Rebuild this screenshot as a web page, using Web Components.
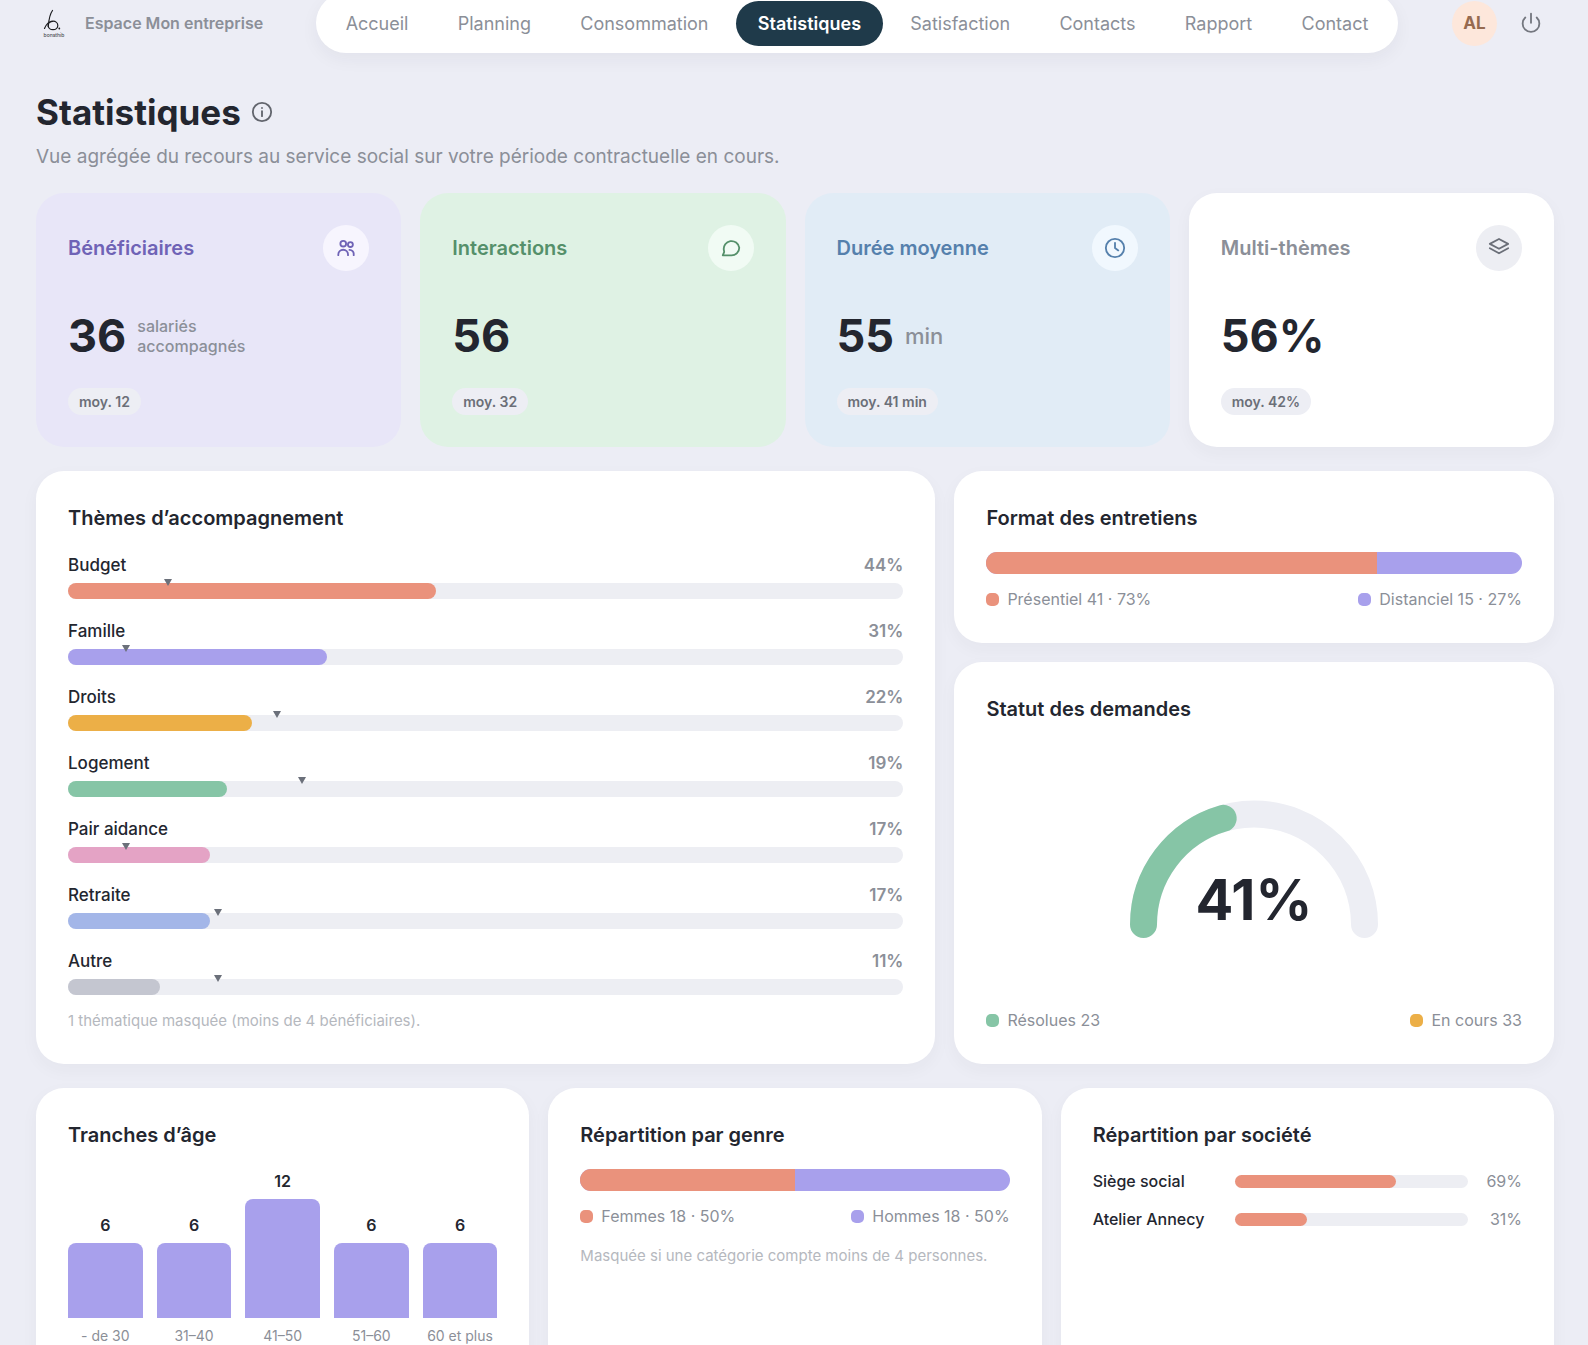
<!DOCTYPE html>
<html lang="fr">
<head>
<meta charset="utf-8">
<meta name="viewport" content="width=device-width, initial-scale=1">
<title>Statistiques</title>
<style>
  :root {
    --bg: #ecedf5; --ink: #23262f; --muted: #8b8f98; --faint: #b5b8be; --track: #edeef3;
    --coral: #ea927c; --lilac: #a8a0ec; --amber: #ecaf47; --green: #86c5a6;
    --pink: #e4a3c5; --blue: #a3b6e8; --grey: #c4c6d0;
    --gap: 19px;
  }
  body {
    margin: 0; height: 100vh; overflow: auto; scrollbar-width: none;
    background: var(--bg); color: var(--ink);
    font: 400 16px/24px Inter, "Open Sans", sans-serif;
  }
</style>
</head>
<body>
<stats-page></stats-page>
<script>
const define = (name, html, setup) => {
  const tpl = document.createElement('template');
  tpl.innerHTML = '<style>*{box-sizing:border-box}</style>' + html;
  customElements.define(name, class extends HTMLElement {
    connectedCallback() {
      if (this.shadowRoot) return;
      const root = this.attachShadow({ mode: 'open' });
      root.append(tpl.content.cloneNode(true));
      if (setup) setup(this, root);
    }
  });
};
const fill = (root, sel, text) => { root.querySelector(sel).textContent = text; };

const icons = {
  users: '<circle cx="9" cy="7.300" r="3.100"/><circle cx="16.800" cy="8.200" r="2.700"/><path d="M3.600 19.800v-.6a5.300 5.300 0 0 1 10.600 0v.6M15.800 14a4.400 4.400 0 0 1 4.600 4.800v1"/>',
  chat: '<path d="M21 11.600a8.400 8.400 0 0 1-8.400 8.400H3l1.300-2.900c.5-1.100.2-1.900-.1-2.800A8.400 8.400 0 1 1 21 11.600z"/>',
  clock: '<circle cx="12" cy="12" r="10"/><path d="M12 6.400V12l3.600 2.600"/>',
  layers: '<path d="M12 2.200 2 7.500 12 12.800l10-5.300z"/><path d="M2 12.300 12 17.700l10-5.400"/>',
  info: '<circle cx="12" cy="12" r="10"/><path d="M12 11v5.500M12 7.500v.2"/>',
  power: '<path d="M12 1.800v10"/><path d="M5.800 6a9.100 9.100 0 1 0 12.400 0"/>'
};
define('app-icon', `
  <style>:host{display:block;width:22px;height:22px;flex:none}
  svg{display:block;width:100%;height:100%;fill:none;stroke:currentColor;stroke-width:2;stroke-linecap:round;stroke-linejoin:round}</style>
  <svg viewBox="0 0 24 24" aria-hidden="true"></svg>`,
  (el, root) => { root.querySelector('svg').innerHTML = icons[el.getAttribute('name')]; });

define('app-header', `
  <style>
    :host{display:grid;grid-template-columns:280px minmax(0,1fr) 156px;align-items:center;margin-top:-7px;height:60px}
    .brand{display:flex;align-items:center;gap:18px;padding-left:5px;color:var(--muted);font-weight:600;font-size:16px;white-space:nowrap}
    .brand svg{width:26px;height:28px;flex:none}
    nav{display:flex;gap:6px;padding:8px 8px 7px;border-radius:30px;height:60px;background:#fff;box-shadow:0 6px 18px rgba(40,40,50,.05)}
    a{flex:1 1 auto;display:flex;align-items:center;justify-content:center;border-radius:23px;color:var(--muted);font-size:18px;text-decoration:none;white-space:nowrap}
    a[aria-current]{background:#1f3a4a;color:#fff;font-weight:600}
    .user{display:flex;align-items:center;justify-content:flex-end;gap:10px}
    .avatar{display:grid;place-items:center;width:45px;height:45px;border-radius:50%;background:#fde7db;color:#966a50;font-weight:700;font-size:17px}
    button{display:grid;place-items:center;width:47px;height:45px;padding:0;border:0;background:none;color:#74777f}
  </style>
  <div class="brand">
    <svg viewBox="0 0 26 28" role="img" aria-label="Logo">
      <path d="M11.500 1.500C8.800 5 7.700 12 7.200 17.500M3.500 19.500c1.600-4 4.800-7 8-7" fill="none" stroke="#1c1d20" stroke-width="1.200" stroke-linecap="round"/>
      <ellipse cx="12" cy="16.400" rx="4.800" ry="4.300" fill="none" stroke="#1c1d20" stroke-width="1.200"/>
      <circle cx="18.300" cy="19.500" r=".9" fill="#1c1d20"/>
      <text x="13" y="27.500" text-anchor="middle" font-size="5" font-weight="500" fill="#4a4c52">bonsthib</text>
    </svg>
    <span>Espace Mon entreprise</span>
  </div>
  <nav aria-label="Navigation principale">
    <a href="#accueil">Accueil</a><a href="#planning">Planning</a><a href="#consommation">Consommation</a>
    <a href="#statistiques" aria-current="page">Statistiques</a><a href="#satisfaction">Satisfaction</a>
    <a href="#contacts">Contacts</a><a href="#rapport">Rapport</a><a href="#contact">Contact</a>
  </nav>
  <div class="user"><span class="avatar">AL</span><button type="button" aria-label="Se déconnecter"><app-icon name="power"></app-icon></button></div>`);

define('page-title', `
  <style>
    :host{display:block;padding:35px 0 23px}
    .line{display:flex;align-items:center;gap:10px}
    h1{margin:0;font-size:35px;line-height:48px;font-weight:700}
    button{padding:0;border:0;background:none;color:#62656d}
    p{margin:8px 0 0;color:var(--muted);font-size:19px;line-height:26px}
  </style>
  <div class="line"><h1><slot name="title"></slot></h1><button type="button" aria-label="Informations"><app-icon name="info"></app-icon></button></div>
  <p><slot></slot></p>`);

define('stat-card', `
  <style>
    :host{display:block;border-radius:28px;padding:32px;background:var(--card,#fff);box-shadow:var(--shadow,none)}
    header{display:flex;align-items:center;justify-content:space-between;color:var(--accent)}
    h2{margin:0;font-size:20px;line-height:28px;font-weight:600}
    .badge{display:grid;place-items:center;width:46px;height:46px;border-radius:50%;background:var(--badge);color:var(--icon,var(--accent))}
    .value{display:flex;align-items:center;gap:11px;height:48px;margin:41px 0 28px}
    strong{font-size:45px;line-height:48px;font-weight:700}
    .unit{color:var(--muted);font-size:16px;line-height:20px;font-weight:500;white-space:pre-line}
    .unit.large{font-size:22px}
    .avg{display:block;width:fit-content;padding:0 11px;border-radius:14px;background:#edeef4;color:#6b6f78;font-size:14px;line-height:27px;font-weight:600}
  </style>
  <header><h2></h2><span class="badge"></span></header>
  <div class="value"><strong></strong><span class="unit"></span></div>
  <span class="avg"><slot></slot></span>`,
  (el, root) => {
    fill(root, 'h2', el.getAttribute('label'));
    fill(root, 'strong', el.getAttribute('value'));
    const unit = el.getAttribute('unit') || '';
    fill(root, '.unit', unit.replace(' ', '\n'));
    root.querySelector('.unit').classList.toggle('large', unit.length < 5);
    const icon = document.createElement('app-icon');
    icon.setAttribute('name', el.getAttribute('icon'));
    root.querySelector('.badge').append(icon);
  });

define('panel-card', `
  <style>
    :host{display:flex;flex-direction:column;min-width:0;border-radius:28px;padding:32px;background:#fff;box-shadow:0 6px 18px rgba(40,40,50,.04)}
    h2{margin:0 0 19px;font-size:20px;line-height:30px;font-weight:600}
  </style>
  <h2></h2><slot></slot>`,
  (el, root) => fill(root, 'h2', el.getAttribute('heading')));

define('theme-row', `
  <style>
    :host{display:block}
    .head{display:flex;justify-content:space-between;font-size:17px;line-height:26px;font-weight:500;margin-bottom:5px}
    .pct{color:var(--muted);font-weight:600}
    .track{position:relative;height:16px;border-radius:8px;background:var(--track)}
    .bar{height:100%;border-radius:8px;background:var(--color)}
    .mark{position:absolute;top:-4px;border:4px solid transparent;border-top:7px solid #6b707a;border-bottom:0;translate:-50% 0}
  </style>
  <div class="head"><slot></slot><span class="pct"></span></div>
  <div class="track"><div class="bar"></div><i class="mark"></i></div>`,
  (el, root) => {
    const v = el.getAttribute('value') + '%';
    fill(root, '.pct', v);
    root.querySelector('.bar').style.width = v;
    root.querySelector('.mark').style.left = el.getAttribute('average') + '%';
  });

define('split-bar', `
  <style>
    :host{display:flex;height:22px;border-radius:11px;overflow:hidden;background:var(--lilac)}
    div{background:var(--coral)}
  </style><div></div>`,
  (el, root) => { root.querySelector('div').style.width = el.getAttribute('value') + '%'; });

define('chart-legend', `
  <style>:host{display:flex;justify-content:space-between;margin-top:13px}</style><slot></slot>`);
define('legend-item', `
  <style>
    :host{display:flex;align-items:center;gap:8px;color:var(--muted);font-size:16px;line-height:24px;white-space:nowrap}
    i{width:13px;height:13px;border-radius:5px;background:var(--color)}
  </style><i></i><span><slot></slot></span>`);

define('foot-note', `
  <style>:host{display:block;margin-top:var(--space,15px);color:var(--faint);font-size:15px;line-height:22px}</style><slot></slot>`);

define('half-gauge', `
  <style>
    :host{flex:1;display:grid;place-items:center}
    svg{display:block;width:248px;height:138px}
    path{fill:none;stroke-width:27;stroke-linecap:round}
    text{font-size:56px;font-weight:700;fill:var(--ink)}
  </style>
  <svg viewBox="0 0 248 138" role="img">
    <path d="M13.500 124.500a110.500 110.500 0 0 1 221 0" stroke="#edeef4"/>
    <path class="on" d="M13.500 124.500a110.500 110.500 0 0 1 221 0" stroke="#86c5a6" pathLength="100"/>
    <text x="124" y="120" text-anchor="middle"></text>
  </svg>`,
  (el, root) => {
    const v = el.getAttribute('value');
    root.querySelector('.on').setAttribute('stroke-dasharray', v + ' 200');
    fill(root, 'text', v + '%');
  });

define('bar-column', `
  <style>
    :host{flex:1 1 0;display:flex;flex-direction:column;align-items:stretch;text-align:center;min-width:0}
    b{font-size:16px;line-height:24px;font-weight:600;margin-bottom:6px}
    .bar{border-radius:8px 8px 0 0;background:var(--lilac)}
    .name{margin-top:8px;color:var(--muted);font-size:14px;line-height:20px;white-space:nowrap}
  </style>
  <b></b><div class="bar"></div><span class="name"><slot></slot></span>`,
  (el, root) => {
    fill(root, 'b', el.getAttribute('value'));
    root.querySelector('.bar').style.height = el.getAttribute('size') + 'px';
  });

define('company-row', `
  <style>
    :host{display:grid;grid-template-columns:128px minmax(0,1fr) 40px;align-items:center;gap:14px;font-size:16px;line-height:24px}
    .name{font-weight:500;white-space:nowrap}
    .track{height:13px;border-radius:7px;background:var(--track)}
    .bar{height:100%;border-radius:7px;background:var(--coral)}
    .pct{color:var(--muted);text-align:right}
  </style>
  <span class="name"><slot></slot></span><div class="track"><div class="bar"></div></div><span class="pct"></span>`,
  (el, root) => {
    const v = el.getAttribute('value') + '%';
    fill(root, '.pct', v);
    root.querySelector('.bar').style.width = v;
  });

define('stats-page', `
  <style>
    :host{display:block;padding:0 34px 34px 36px}
    .row{display:grid;gap:var(--gap);margin-bottom:24px}
    .four{grid-template-columns:repeat(4,minmax(0,1fr))}
    .two{grid-template-columns:minmax(0,3fr) minmax(0,2fr)}
    .three{grid-template-columns:repeat(3,minmax(0,1fr))}
    .stack{display:flex;flex-direction:column;gap:var(--gap)}
    .stack panel-card:last-child{flex:1}
    .list{display:flex;flex-direction:column;gap:19px}
    .list.tight{gap:14px}
    .chart{display:flex;align-items:flex-end;gap:14px}
    .violet{--card:#e8e6f8;--accent:#6f63b6;--badge:#f7f5fe}
    .mint{--card:#dff2e4;--accent:#55906a;--badge:#f1fbf4}
    .sky{--card:#e1ecf6;--accent:#5580ac;--badge:#f1f8fe}
    .plain{--accent:var(--muted);--icon:#6b6f78;--badge:#edeef3;--shadow:0 6px 18px rgba(40,40,50,.04)}
  </style>
  <app-header></app-header>
  <main>
    <page-title><span slot="title">Statistiques</span>Vue agrégée du recours au service social sur votre période contractuelle en cours.</page-title>
    <section class="row four">
      <stat-card class="violet" label="Bénéficiaires" value="36" unit="salariés accompagnés" icon="users">moy. 12</stat-card>
      <stat-card class="mint" label="Interactions" value="56" icon="chat">moy. 32</stat-card>
      <stat-card class="sky" label="Durée moyenne" value="55" unit="min" icon="clock">moy. 41 min</stat-card>
      <stat-card class="plain" label="Multi-thèmes" value="56%" icon="layers">moy. 42%</stat-card>
    </section>
    <section class="row two">
      <panel-card heading="Thèmes d’accompagnement">
        <div class="list">
          <theme-row value="44" average="12" style="--color:var(--coral)">Budget</theme-row>
          <theme-row value="31" average="7" style="--color:var(--lilac)">Famille</theme-row>
          <theme-row value="22" average="25" style="--color:var(--amber)">Droits</theme-row>
          <theme-row value="19" average="28" style="--color:var(--green)">Logement</theme-row>
          <theme-row value="17" average="7" style="--color:var(--pink)">Pair aidance</theme-row>
          <theme-row value="17" average="18" style="--color:var(--blue)">Retraite</theme-row>
          <theme-row value="11" average="18" style="--color:var(--grey)">Autre</theme-row>
        </div>
        <foot-note>1 thématique masquée (moins de 4 bénéficiaires).</foot-note>
      </panel-card>
      <div class="stack">
        <panel-card heading="Format des entretiens">
          <split-bar value="73"></split-bar>
          <chart-legend>
            <legend-item style="--color:var(--coral)">Présentiel 41 · 73%</legend-item>
            <legend-item style="--color:var(--lilac)">Distanciel 15 · 27%</legend-item>
          </chart-legend>
        </panel-card>
        <panel-card heading="Statut des demandes">
          <half-gauge value="41"></half-gauge>
          <chart-legend>
            <legend-item style="--color:var(--green)">Résolues 23</legend-item>
            <legend-item style="--color:var(--amber)">En cours 33</legend-item>
          </chart-legend>
        </panel-card>
      </div>
    </section>
    <section class="row three">
      <panel-card heading="Tranches d’âge">
        <div class="chart">
          <bar-column value="6" size="75">- de 30</bar-column>
          <bar-column value="6" size="75">31–40</bar-column>
          <bar-column value="12" size="119">41–50</bar-column>
          <bar-column value="6" size="75">51–60</bar-column>
          <bar-column value="6" size="75">60 et plus</bar-column>
        </div>
      </panel-card>
      <panel-card heading="Répartition par genre">
        <split-bar value="50"></split-bar>
        <chart-legend>
          <legend-item style="--color:var(--coral)">Femmes 18 · 50%</legend-item>
          <legend-item style="--color:var(--lilac)">Hommes 18 · 50%</legend-item>
        </chart-legend>
        <foot-note style="--space:17px">Masquée si une catégorie compte moins de 4 personnes.</foot-note>
      </panel-card>
      <panel-card heading="Répartition par société">
        <div class="list tight">
          <company-row value="69">Siège social</company-row>
          <company-row value="31">Atelier Annecy</company-row>
        </div>
      </panel-card>
    </section>
  </main>`);
</script>
</body>
</html>
